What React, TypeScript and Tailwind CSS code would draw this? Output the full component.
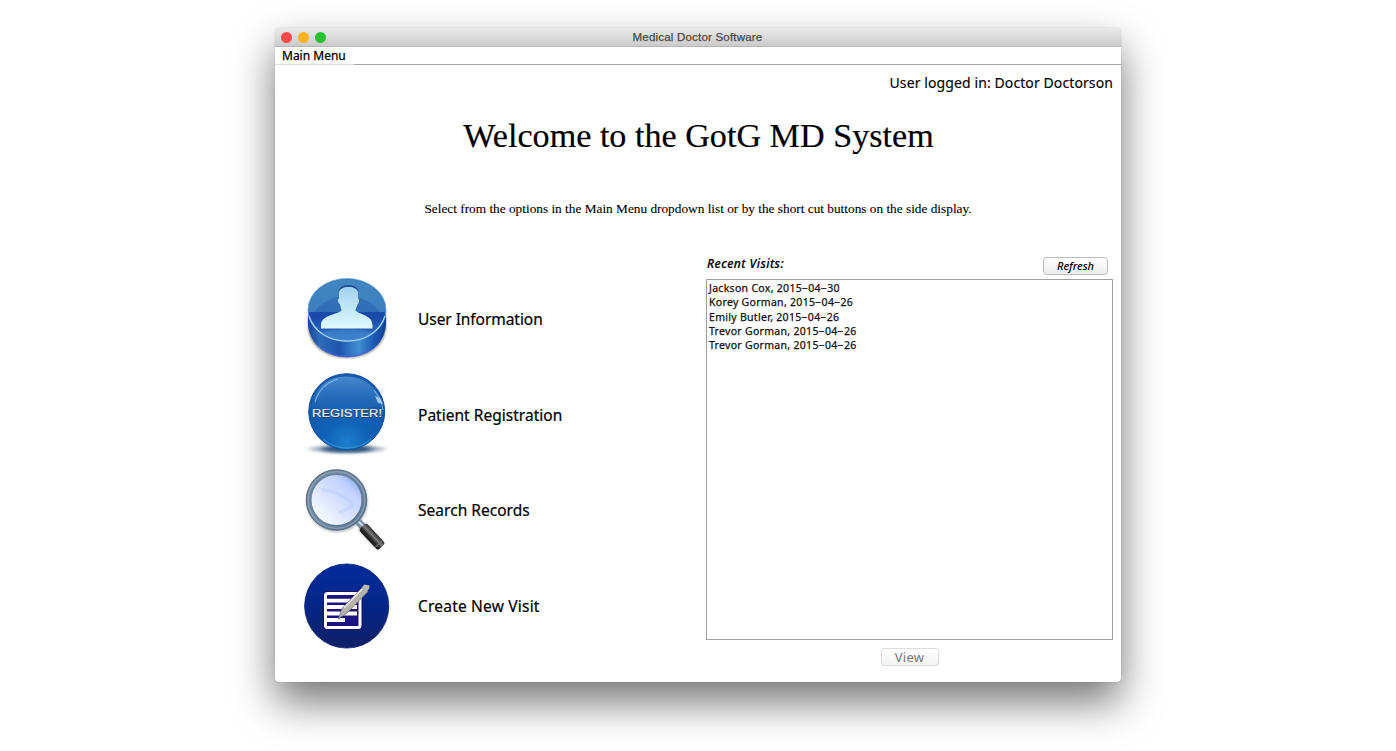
import type { ReactNode } from "react";

function UserIcon() {
  return (
    <svg className="block h-[96px] w-[110px]" viewBox="0 2 110 96">
      <defs>
        <linearGradient id="uSide" x1="0" x2="1" y1="0" y2="0">
          <stop offset="0" stopColor="#16439a" />
          <stop offset="0.15" stopColor="#2f6cba" />
          <stop offset="0.4" stopColor="#1c55ac" />
          <stop offset="0.65" stopColor="#4290d2" />
          <stop offset="0.85" stopColor="#1a57b4" />
          <stop offset="1" stopColor="#123f92" />
        </linearGradient>
        <linearGradient id="uTop" x1="0" x2="0" y1="0" y2="1">
          <stop offset="0" stopColor="#2d6db2" />
          <stop offset="0.5" stopColor="#1b4da8" />
          <stop offset="0.6" stopColor="#1a49ae" />
          <stop offset="1" stopColor="#3b86d0" />
        </linearGradient>
        <linearGradient id="uMan" x1="0" x2="0" y1="0" y2="1">
          <stop offset="0" stopColor="#a2d2ef" />
          <stop offset="1" stopColor="#e0fafe" />
        </linearGradient>
        <filter id="uBlur"><feGaussianBlur stdDeviation="1.2" /></filter>
        <clipPath id="uClip"><ellipse cx="52" cy="40" rx="38.5" ry="30.5" /></clipPath>
      </defs>
      <path d="M13 44v15c2 18 18 29 39 29s37-11 39-29V44z" fill="#58534f" opacity="0.6" filter="url(#uBlur)" />
      <path d="M13 40v15c2 20 18 32 39 32s37-12 39-32V40z" fill="url(#uSide)" />
      <path d="M28 79c14 10 34 10 48 0" fill="none" stroke="#4a5ae0" strokeWidth="2" opacity="0.6" />
      <ellipse cx="52" cy="40" rx="39" ry="31.5" fill="url(#uTop)" stroke="#73add8" strokeWidth="0.9" />
      <g clipPath="url(#uClip)">
        <rect x="12" y="8" width="80" height="34" fill="#4a92c8" opacity="0.72" />
        <ellipse cx="52" cy="58" rx="38" ry="32" fill="#1648a2" opacity="0.3" />
        <ellipse cx="52" cy="68" rx="32" ry="9" fill="#6ab3ea" opacity="0.3" filter="url(#uBlur)" />
      </g>
      <path d="M44.500 22c0-8 18-8 18 0" fill="none" stroke="#1d4b92" strokeWidth="2" />
      <path d="M44 22.500c0-7.500 19-7.500 19 0v6c1.500 0 1.500 4.500-.5 6-1 3-2 4-2 6 3 4 17 4.500 17 14.500v3.500H26V55c0-10 17-10.500 20.500-14.500 0-2-1-3-1.500-6-2-1.500-3-6-1-6z" fill="url(#uMan)" />
      <path d="M14 46c5 15 19 25 38 25s33-10 38-25" fill="none" stroke="#a7d6f2" strokeWidth="1.200" />
    </svg>
  );
}

function RegisterIcon() {
  return (
    <svg className="block h-[96px] w-[110px]" viewBox="0 2 110 96">
      <defs>
        <radialGradient id="rBall" cx="0.5" cy="0.9" r="0.9">
          <stop offset="0" stopColor="#1f7fce" />
          <stop offset="0.3" stopColor="#0f63b8" />
          <stop offset="0.7" stopColor="#1159a9" />
          <stop offset="1" stopColor="#1a5dae" />
        </radialGradient>
        <linearGradient id="rGloss" x1="0" x2="0" y1="0" y2="1">
          <stop offset="0" stopColor="#5b9bdb" stopOpacity="0.7" />
          <stop offset="1" stopColor="#3d83cc" stopOpacity="0.1" />
        </linearGradient>
        <filter id="rBlur" x="-20%" y="-100%" width="140%" height="300%"><feGaussianBlur stdDeviation="3 1.5" /></filter>
      </defs>
      <ellipse cx="52" cy="84" rx="38" ry="4" fill="#7f92a6" opacity="0.65" filter="url(#rBlur)" />
      <ellipse cx="52" cy="84" rx="26" ry="3.5" fill="#103d70" opacity="0.8" filter="url(#rBlur)" />
      <circle cx="51.7" cy="46.7" r="38" fill="url(#rBall)" stroke="#0d4e9d" strokeWidth="1" />
      <path d="M17 43C18 23 33 11.5 51 11.5s34 11.5 35 31.5c-12-4-23 5-39 4-13-1-20-4-30-4z" fill="url(#rGloss)" />
      <path d="M20 37c4-13 12-20 23-23M79 25c5 6 8 12 9 20" fill="none" stroke="#8dc0ed" strokeWidth="1.3" opacity="0.65" />
      <path d="M80 31l5 2 3 6-5-1zM84 25l3 4 1-3z" fill="#b8ddfa" opacity="0.8" />
      <path d="M28 74c14 12 34 12 48 0" fill="none" stroke="#54b9f2" strokeWidth="1.3" opacity="0.4" />
      <text x="17.7" y="53" textLength="70" lengthAdjust="spacingAndGlyphs" fill="#333d4b" className="font-['Liberation_Sans'] text-[11.7px]">REGISTER!</text>
      <text x="17" y="52.3" textLength="70" lengthAdjust="spacingAndGlyphs" fill="#e9ebee" stroke="#e9ebee" strokeWidth="0.2" className="font-['Liberation_Sans'] text-[11.7px]">REGISTER!</text>
    </svg>
  );
}

function SearchIcon() {
  return (
    <svg className="block h-[96px] w-[110px]" viewBox="0 0.5 110 96">
      <defs>
        <linearGradient id="sLens" x1="0.95" x2="0.2" y1="0.1" y2="0.9">
          <stop offset="0" stopColor="#86a8f2" />
          <stop offset="0.25" stopColor="#c0d2ff" />
          <stop offset="0.65" stopColor="#dde6ff" />
          <stop offset="1" stopColor="#f7faff" />
        </linearGradient>
        <linearGradient id="sRing" x1="0" x2="1" y1="0" y2="1">
          <stop offset="0" stopColor="#6e8398" />
          <stop offset="0.5" stopColor="#68849f" />
          <stop offset="1" stopColor="#58718d" />
        </linearGradient>
        <linearGradient id="sGrip" x1="0" x2="0" y1="0" y2="1">
          <stop offset="0" stopColor="#292929" />
          <stop offset="0.4" stopColor="#7b7b7b" />
          <stop offset="0.65" stopColor="#303030" />
          <stop offset="1" stopColor="#111" />
        </linearGradient>
        <filter id="sBlur"><feGaussianBlur stdDeviation="1.2" /></filter>
      </defs>
      <circle cx="42" cy="39" r="29" fill="none" stroke="#868686" strokeWidth="4" opacity="0.45" filter="url(#sBlur)" />
      <g transform="translate(62 58) rotate(47)">
        <rect x="0" y="-3.5" width="13" height="7" fill="#7890aa" />
        <rect x="2" y="-1.5" width="10" height="2" fill="#d8e3ee" />
        <rect x="7" y="-5" width="29" height="11" rx="2.5" fill="#777" opacity="0.4" filter="url(#sBlur)" />
        <rect x="8" y="-5.2" width="28" height="10.4" rx="2.5" fill="url(#sGrip)" />
        <rect x="31.5" y="-5" width="1.2" height="10" fill="#777" />
      </g>
      <circle cx="41.5" cy="37.5" r="26" fill="url(#sLens)" />
      <path d="M26 27c13 1 24 7 32 14M43 50c6-1 11-4 16-8" fill="none" stroke="#a3bbf3" strokeWidth="3.5" opacity="0.25" />
      <circle cx="41.5" cy="37.5" r="27.7" fill="none" stroke="url(#sRing)" strokeWidth="5.5" />
      <circle cx="41.5" cy="37.5" r="28.2" fill="none" stroke="#94aabe" strokeWidth="1.5" opacity="0.7" />
      <circle cx="41.5" cy="37.5" r="30.3" fill="none" stroke="#526477" strokeWidth="0.7" />
    </svg>
  );
}

function VisitIcon() {
  return (
    <svg className="block h-[96px] w-[110px]" viewBox="0 0 110 96">
      <defs>
        <linearGradient id="vDisc" x1="0" x2="0" y1="0" y2="1">
          <stop offset="0" stopColor="#032c9b" />
          <stop offset="0.45" stopColor="#03268a" />
          <stop offset="1" stopColor="#102067" />
        </linearGradient>
      </defs>
      <circle cx="51.7" cy="47" r="42.1" fill="url(#vDisc)" stroke="#092074" strokeWidth="0.8" />
      <rect x="30.5" y="34.5" width="34.5" height="34" rx="2" fill="none" stroke="#22116b" strokeWidth="5" />
      <rect x="30.5" y="34.5" width="34.5" height="34" rx="2" fill="#1d1280" stroke="#fff" strokeWidth="3" />
      <path d="M32 41.6h30M32 48h30M32 54.5h30M32 61h18" stroke="#fff" strokeWidth="3.8" />
      <path d="M43 61l4-12 22-23 5 4-22 24z" fill="#28205e" opacity="0.6" />
      <path d="M43.5 59.5l3.5-10 21-21.5 5 4.5-21 21.5z" fill="#b3b2ac" stroke="#77767a" strokeWidth="0.7" />
      <path d="M49 49l18-19" stroke="#eceae2" strokeWidth="1.6" />
      <path d="M67 28l2.5-2.5 5 1-.4 3.2-2.3 2.5z" fill="#b9b8b2" />
    </svg>
  );
}

interface Shortcut {
  icon: ReactNode;
  label: string;
  tracking: string;
}

const shortcuts: Shortcut[] = [
  { icon: <UserIcon />, label: "User Information", tracking: "tracking-[-0.06px]" },
  { icon: <RegisterIcon />, label: "Patient Registration", tracking: "tracking-[0.02px]" },
  { icon: <SearchIcon />, label: "Search Records", tracking: "tracking-[0.03px]" },
  { icon: <VisitIcon />, label: "Create New Visit", tracking: "tracking-[0.2px]" },
];

const visits = [
  "Jackson Cox, 2015−04−30",
  "Korey Gorman, 2015−04−26",
  "Emily Butler, 2015−04−26",
  "Trevor Gorman, 2015−04−26",
  "Trevor Gorman, 2015−04−26",
];

export default function App() {
  return (
    <div className="flex h-[751px] w-full justify-center overflow-hidden bg-white pt-7 font-['Noto_Sans',sans-serif] text-black">
      <div className="flex h-[654px] w-[846px] flex-col rounded-[4px] bg-white shadow-[0_20px_42px_rgba(0,0,0,0.54),0_0_1px_rgba(0,0,0,0.4)]">
        <header className="flex h-[19px] shrink-0 items-center rounded-t-[4px] border-b border-[#b6b6b6] bg-gradient-to-b from-[#e9e9e9] to-[#cbcbcb] pl-1.5">
          <div className="flex w-[60px] gap-[6px]">
            <span className="size-[11px] rounded-full bg-[#fc4a48]" />
            <span className="size-[11px] rounded-full bg-[#fdb124]" />
            <span className="size-[11px] rounded-full bg-[#28c231]" />
          </div>
          <div className="flex-1 pr-[67px] text-center font-['Liberation_Sans',sans-serif] text-[11.5px] leading-[18px] tracking-[0.2px] text-[#4b4b4b] [-webkit-text-stroke:0.25px]">
            Medical Doctor Software
          </div>
        </header>
        <nav className="flex h-[18px] shrink-0 border-b border-[#a5a5a5]">
          <div className="-mb-px w-[79px] border-b border-[#dedede] pl-[7px] text-[12px] leading-[18px] whitespace-nowrap [-webkit-text-stroke:0.25px]">Main Menu</div>
        </nav>
        <div className="flex h-[34px] shrink-0 items-center justify-end pr-[8px] text-[14px] tracking-[0.1px] [-webkit-text-stroke:0.15px]">User logged in: Doctor Doctorson</div>
        <h1 className="flex h-[73px] shrink-0 items-center justify-center pt-px pl-px font-['Liberation_Serif',serif] text-[34.15px] [-webkit-text-stroke:0.2px]">Welcome to the GotG MD System</h1>
        <p className="flex h-[77px] shrink-0 items-center justify-center pb-[3px] font-['Liberation_Serif',serif] text-[13.3px] [-webkit-text-stroke:0.1px]">
          Select from the options in the Main Menu dropdown list or by the short cut buttons on the side display.
        </p>
        <main className="flex flex-1">
          <ul className="w-[431px] pt-[23px] pl-5">
            {shortcuts.map((s) => (
              <li key={s.label} className="flex h-[95.6px] items-center gap-[13px]">
                {s.icon}
                <span className={`text-[15.5px] whitespace-nowrap [-webkit-text-stroke:0.2px] ${s.tracking}`}>{s.label}</span>
              </li>
            ))}
          </ul>
          <section className="flex w-[407px] flex-col">
            <div className="flex h-[30px] items-start justify-between pr-[5px]">
              <h2 className="pt-[6px] pl-px text-[12px] leading-[18px] font-medium tracking-[0.45px] italic [-webkit-text-stroke:0.2px]">Recent Visits:</h2>
              <button className="mt-[8px] h-[18px] w-[65px] rounded-[4px] border border-[#bdbdbd] bg-gradient-to-b from-white to-[#ededed] text-[11px] leading-[14px] font-medium italic">Refresh</button>
            </div>
            <ul className="h-[361px] border border-[#a0a0a0] pt-[1px] pl-[2px] text-[10.5px] leading-[14.35px] tracking-[0.3px] text-[#111] [-webkit-text-stroke:0.25px]">
              {visits.map((v, i) => (
                <li key={i} className="whitespace-nowrap">{v}</li>
              ))}
            </ul>
            <button className="mt-[8px] h-[18px] w-[58px] self-center rounded-[3px] border border-[#dcdcdc] bg-gradient-to-b from-white to-[#f3f3f3] text-[13px] leading-[14px] tracking-[0.3px] text-[#777]">View</button>
          </section>
        </main>
      </div>
    </div>
  );
}
